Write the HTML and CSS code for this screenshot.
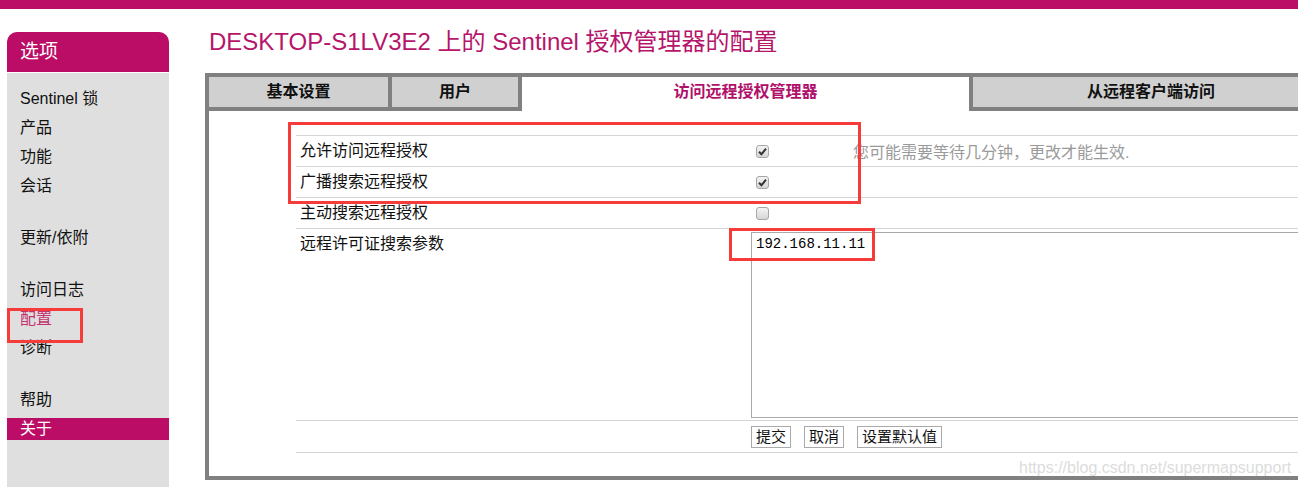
FILE: index.html
```html
<!DOCTYPE html>
<html lang="zh">
<head>
    <meta charset="UTF-8">
    <meta name="viewport" content="width=device-width, initial-scale=1.0">
    <title>Sentinel 授权管理器 - 配置</title>
    <link rel="stylesheet" href="styles.css">
</head>
<body>
    <div class="topbar"></div>

    <div class="page">
        <div class="sidebar">
            <div class="side-head">选项</div>
            <ul class="side-menu">
                <li class="group">
                    <a>Sentinel 锁</a>
                    <a>产品</a>
                    <a>功能</a>
                    <a>会话</a>
                </li>
                <li class="group">
                    <a>更新/依附</a>
                </li>
                <li class="group">
                    <a>访问日志</a>
                    <a class="current">配置</a>
                    <a>诊断</a>
                </li>
                <li class="group">
                    <a>帮助</a>
                    <a class="selected">关于</a>
                </li>
            </ul>
        </div>

        <div class="main">
            <h1 class="title">DESKTOP-S1LV3E2 上的 Sentinel 授权管理器的配置</h1>

            <div class="panel">
                <div class="tabs">
                    <div class="tab tab-basic">基本设置</div>
                    <div class="tab tab-users">用户</div>
                    <div class="tab tab-remote active">访问远程授权管理器</div>
                    <div class="tab tab-clients">从远程客户端访问</div>
                </div>

                <div class="tab-body">
                    <div class="opt-row">
                        <span class="opt-label">允许访问远程授权</span>
                        <span class="check on"><svg viewBox="0 0 13 13" width="13" height="13"><path d="M3 6.8 L5.4 9.3 L10 3.6" fill="none" stroke="#333" stroke-width="2"/></svg></span>
                        <span class="hint">您可能需要等待几分钟，更改才能生效.</span>
                    </div>
                    <div class="opt-row">
                        <span class="opt-label">广播搜索远程授权</span>
                        <span class="check on"><svg viewBox="0 0 13 13" width="13" height="13"><path d="M3 6.8 L5.4 9.3 L10 3.6" fill="none" stroke="#333" stroke-width="2"/></svg></span>
                        <span></span>
                    </div>
                    <div class="opt-row">
                        <span class="opt-label">主动搜索远程授权</span>
                        <span class="check"></span>
                        <span></span>
                    </div>
                    <div class="opt-row tall">
                        <span class="opt-label">远程许可证搜索参数</span>
                        <textarea class="params">192.168.11.11</textarea>
                    </div>
                    <div class="opt-row last">
                        <span></span>
                        <div class="buttons">
                            <button>提交</button>
                            <button>取消</button>
                            <button>设置默认值</button>
                        </div>
                    </div>
                </div>
            </div>
        </div>
    </div>

    <div class="mark mark-options"></div>
    <div class="mark mark-ip"></div>
    <div class="mark mark-menu"></div>
    <div class="watermark">https://blog.csdn.net/supermapsupport</div>
</body>
</html>
```

FILE: styles.css
```css
html, body { margin: 0; overflow: hidden; }
body { font-family: "Liberation Sans", "Noto Sans CJK SC", sans-serif; color: #111; background: #fff; }

.topbar { height: 9px; background: #bb0c66; }

.page { display: flex; align-items: flex-start; }

/* menu a gauche */
.sidebar { flex: 0 0 162px; margin: 23px 0 0 7px; background: #dfdfdf; border-radius: 10px 10px 0 0; overflow: hidden; }
.side-head { height: 40px; line-height: 40px; padding-left: 13px; font-size: 19px; color: #fff; background: #bb0c66; border-bottom: 1px solid #fff; }
.side-menu { list-style: none; margin: 0; padding: 15px 0 40px; }
.side-menu .group { padding-bottom: 23px; }
.side-menu .group:last-child { padding-bottom: 0; }
.side-menu a { display: block; height: 22px; line-height: 22px; margin-bottom: 7px; padding-left: 13px; font-size: 16px; color: #111; }
.side-menu a.current { color: #c2336f; }
.side-menu a.selected { background: #bb0c66; color: #fff; }

/* zone principale */
.main { flex: 0 0 auto; margin-left: 36px; }
.title { margin: 18px 0 16px; padding-left: 4px; font-size: 24px; line-height: 30px; font-weight: normal; color: #b5156a; white-space: nowrap; }

.panel { width: 1128px; box-sizing: border-box; border: 4px solid #808080; }
.tabs { display: flex; align-items: flex-start; gap: 4px; background: #808080; }
.tab { height: 30px; line-height: 30px; margin-bottom: 4px; text-align: center; background: #d0d0d0; font-size: 16px; font-weight: bold; color: #111; }
.tab.active { height: 34px; margin-bottom: 0; background: #fff; color: #b0106a; }
.tab-basic { width: 179px; }
.tab-users { width: 126px; }
.tab-remote { width: 447px; }
.tab-clients { width: 356px; }

.tab-body { background: #fff; padding: 24px 0 23px 87px; }

.opt-row { display: grid; grid-template-columns: 455px 98px 1fr; align-items: center; height: 31px; box-sizing: border-box; border-top: 1px solid #d4d4d4; }
.opt-row.tall { height: 192px; align-items: start; }
.opt-row.last { height: 33px; border-bottom: 1px solid #d4d4d4; }
.opt-label { padding-left: 4px; font-size: 16px; line-height: 22px; }
.opt-row.tall .opt-label { padding-top: 4px; }
.hint { padding-left: 4px; font-size: 16px; color: #9a9a9a; white-space: nowrap; }

.check { display: block; width: 13px; height: 13px; margin-left: 5px; box-sizing: border-box; border: 1px solid #a6a6a6; border-radius: 3px; background: linear-gradient(#f4f4f4, #d6d6d6); position: relative; }
.check svg { position: absolute; left: -1px; top: -1px; }

.params { grid-column: 2 / 4; height: 186px; margin: 3px 0 2px; padding: 3px 4px; box-sizing: border-box; border: 1px solid #a9a9a9; resize: none; font-family: "Liberation Mono", monospace; font-size: 14px; line-height: 16px; color: #000; }

.buttons { grid-column: 2 / 4; display: flex; gap: 13px; align-self: start; margin-top: 5px; }
.buttons button { height: 22px; padding: 0 4px; box-sizing: border-box; border: 1px solid #aaa; background: #fff; font-family: "Liberation Sans", "Noto Sans CJK SC", sans-serif; font-size: 15px; line-height: 20px; color: #111; }

/* annotations */
.mark { position: absolute; box-sizing: border-box; border: 3px solid #f63b3b; }
.mark-options { left: 288px; top: 122px; width: 573px; height: 82px; }
.mark-ip { left: 729px; top: 228px; width: 146px; height: 33px; }
.mark-menu { left: 7px; top: 308px; width: 76px; height: 35px; }

.watermark { position: absolute; left: 1019px; top: 459px; font-size: 16px; line-height: 18px; color: #dcdcdc; white-space: nowrap; }
```
